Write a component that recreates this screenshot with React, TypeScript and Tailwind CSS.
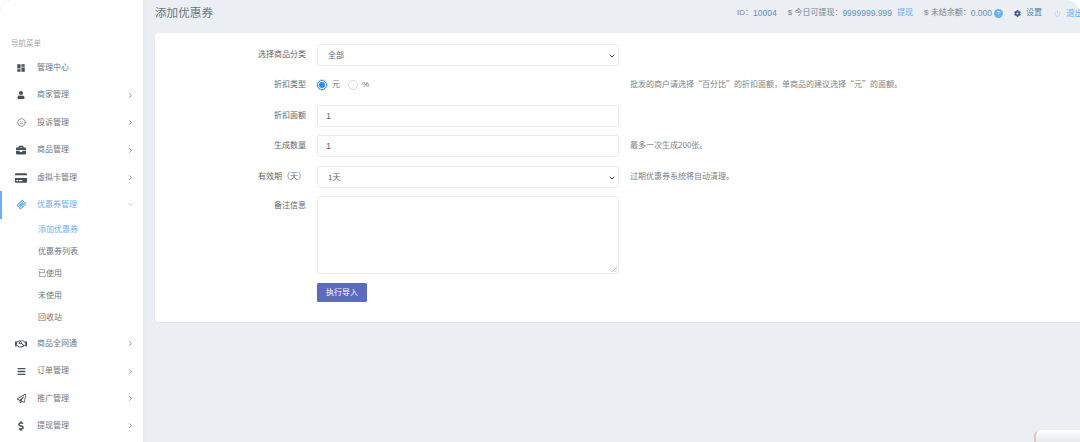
import type { ReactNode } from "react";
import { ChevronDown, ChevronRight, Frown, Power } from "lucide-react";
import { FaBars, FaBriefcase, FaCog, FaCreditCard, FaDollarSign, FaRegHandshake, FaRegPaperPlane, FaTicketAlt, FaUser } from "react-icons/fa";
import { MdDashboard } from "react-icons/md";

const font = "font-['Liberation_Sans','Noto_Sans_CJK_SC',sans-serif]";

function NavItem({ icon, label, arrow = true, active = false }: { icon: ReactNode; label: string; arrow?: boolean; active?: boolean }) {
  return (
    <div className={`relative flex h-[27.4px] items-center pl-[14px] pr-[9px] text-[8px] ${active ? "text-[#6ab0f5]" : "text-[#6c757d]"}`}>
      {active && <span className="absolute left-0 top-0 h-full w-[1.5px] bg-[#6ab0f5]" />}
      <span className={`flex w-[14px] justify-center ${active ? "text-[#6ab0f5]" : "text-[#46515c]"}`}>{icon}</span>
      <span className="ml-[9px] flex-1">{label}</span>
      {arrow && (active ? <ChevronDown size={7} strokeWidth={2} /> : <ChevronRight size={7} strokeWidth={2.5} className="text-[#5b6670]" />)}
    </div>
  );
}

function SubItem({ label, active = false }: { label: string; active?: boolean }) {
  return <div className={`flex h-[22px] items-center pl-[38px] text-[8px] ${active ? "text-[#6ab0f5]" : "text-[#6c757d]"}`}>{label}</div>;
}

function Row({ label, hint, className = "", top = false, children }: { label: string; hint?: string; className?: string; top?: boolean; children: ReactNode }) {
  return (
    <div className={`flex ${top ? "items-start" : "items-center"} ${className}`}>
      <div className={`w-[151px] shrink-0 text-right text-[8px] text-[#5f666d] ${top ? "pt-[4px]" : ""}`}>{label}</div>
      <div className="ml-[11px] w-[302px] shrink-0">{children}</div>
      {hint && <div className="ml-[11px] pb-[2px] font-['Noto_Sans_CJK_SC',sans-serif] text-[8px] text-[#7b8288]">{hint}</div>}
    </div>
  );
}

function SelectBox({ value }: { value: string }) {
  return (
    <div className="flex h-[22px] items-center justify-between rounded-[3px] border border-[#e9ecef] bg-white pl-[10px] pr-[2px] pt-[1px] text-[8px] text-[#5f666d]">
      <span>{value}</span>
      <ChevronDown size={8} strokeWidth={3} className="text-[#343a40]" />
    </div>
  );
}

function InputBox({ value }: { value: string }) {
  return <div className="flex h-[22px] items-center rounded-[3px] border border-[#e9ecef] bg-white pl-[8px] pt-[1px] text-[9px] text-[#5f666d]">{value}</div>;
}

export default function App() {
  return (
    <div className={`relative flex h-[442px] w-[1080px] overflow-hidden bg-white ${font}`} lang="zh-CN">
      <aside className="z-10 flex h-full w-[143px] shrink-0 flex-col bg-white pt-[38px]">
        <div className="mb-[5px] pl-[11px] text-[7.5px] text-[#a4abb2]">导航菜单</div>
        <NavItem icon={<MdDashboard size={10} />} label="管理中心" arrow={false} />
        <NavItem icon={<FaUser size={8} />} label="商家管理" />
        <NavItem icon={<Frown size={9} strokeWidth={1.5} />} label="投诉管理" />
        <NavItem icon={<FaBriefcase size={10} />} label="商品管理" />
        <NavItem icon={<FaCreditCard size={12} />} label="虚拟卡管理" />
        <NavItem icon={<FaTicketAlt size={9} className="-rotate-45" />} label="优惠券管理" active />
        <SubItem label="添加优惠券" active />
        <SubItem label="优惠券列表" />
        <SubItem label="已使用" />
        <SubItem label="未使用" />
        <SubItem label="回收站" />
        <div className="h-[1.5px] shrink-0" />
        <NavItem icon={<FaRegHandshake size={12} />} label="商品全网通" />
        <NavItem icon={<FaBars size={9} />} label="订单管理" />
        <NavItem icon={<FaRegPaperPlane size={9} />} label="推广管理" />
        <NavItem icon={<FaDollarSign size={10} />} label="提现管理" />
      </aside>

      <main className="flex min-w-0 flex-1 flex-col rounded-tr-[14px] bg-[#ebeff3] pl-[12px] shadow-[inset_6px_0_6px_-6px_rgba(0,0,0,0.06)]">
        <header className="flex h-[33px] shrink-0 items-center pb-[7px]">
          <h1 className="text-[11.6px] font-normal text-[#6c757d]">添加优惠券</h1>
          <div className="ml-auto mr-[-3px] flex items-center text-[8px] text-[#7b8288]">
            <span>ID：</span>
            <span className="text-[8.5px] text-[#5d8fb8]">10004</span>
            <span className="ml-[11px]">$ 今日可提现：</span>
            <span className="text-[8.5px] text-[#5d8fb8]">9999999.999</span>
            <span className="ml-[5px] text-[#6ab0f5]">提现</span>
            <span className="ml-[11px]">$ 未结余额：</span>
            <span className="text-[8.5px] text-[#5d8fb8]">0.000</span>
            <span className="ml-[2px] flex h-[9px] w-[9px] items-center justify-center rounded-full bg-[#6ab0f5] text-[6px] text-white">?</span>
            <FaCog size={7} className="ml-[11px] text-[#34558b]" />
            <span className="ml-[5px] text-[#5d7ea6]">设置</span>
            <Power size={7} className="ml-[12px] text-[#a4cbf3]" />
            <span className="ml-[5px] text-[8.5px] text-[#6ab0f5]">退出</span>
          </div>
        </header>

        <section className="mr-[-10px] flex h-[289px] shrink-0 flex-col rounded-[4px] bg-white pt-[11px] shadow-[0_1px_2px_rgba(0,0,0,0.05)]">
          <Row label="选择商品分类"><SelectBox value="全部" /></Row>
          <Row label="折扣类型" hint="批发的商户请选择“百分比”的折扣面额，单商品的建议选择“元”的面额。" className="mt-[8px] h-[22px]">
            <div className="flex items-center text-[8px] text-[#6c757d]">
              <span className="flex h-[10px] w-[10px] items-center justify-center rounded-full border border-[#2f8be6] shadow-[0_0_0_1px_rgba(106,176,245,0.35)]">
                <span className="h-[6px] w-[6px] rounded-full bg-[#2f8be6]" />
              </span>
              <span className="ml-[5px]">元</span>
              <span className="ml-[8px] h-[10px] w-[10px] rounded-full border border-[#d5d9dd]" />
              <span className="ml-[4px]">%</span>
            </div>
          </Row>
          <Row label="折扣面额" className="mt-[9px]"><InputBox value="1" /></Row>
          <Row label="生成数量" hint="最多一次生成200张。" className="mt-[8px]"><InputBox value="1" /></Row>
          <Row label="有效期（天）" hint="过期优惠券系统将自动清理。" className="mt-[9px]"><SelectBox value="1天" /></Row>
          <Row label="备注信息" top className="mt-[8px]">
            <div className="relative h-[78px] rounded-[3px] border border-[#e9ecef] bg-white">
              <svg viewBox="0 0 6 6" className="absolute bottom-[1px] right-[1px] h-[5px] w-[5px]" stroke="#8a8f94" strokeWidth="0.7"><path d="M0 6 6 0M3 6 6 3" /></svg>
            </div>
          </Row>
          <div className="ml-[162px] mt-[9px] flex h-[19px] w-[50px] items-center justify-center rounded-[1.5px] bg-[#5c6bc0] text-[8px] text-white">执行导入</div>
        </section>
      </main>

      <div className="absolute left-0 top-0 z-20 h-[10px] w-[10px] rounded-tl-[10px] border-l border-t border-dotted border-[#e4e4e4]" />
      <div className="absolute bottom-[-4px] right-0 h-[16px] w-[46px] rounded-tl-[6px] border-l-2 border-[#dcc9b4] bg-gradient-to-b from-white to-[#dfe3e6]" />
    </div>
  );
}
